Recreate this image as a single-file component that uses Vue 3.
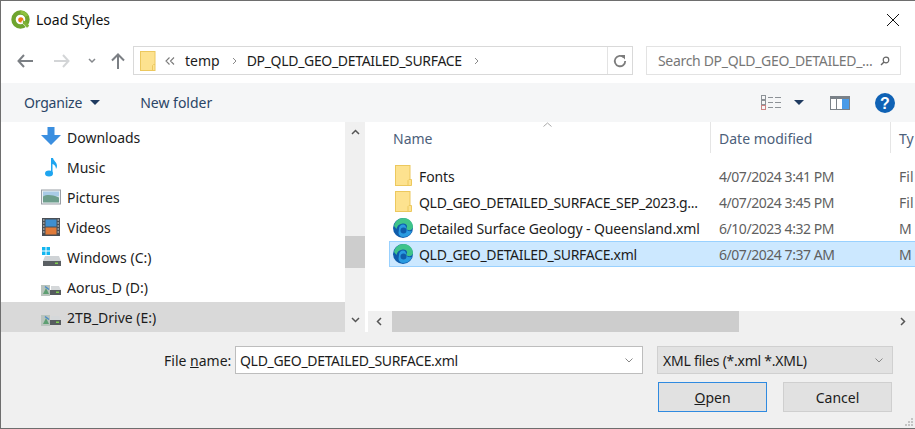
<template>
  <div class="dialog">
    <!-- Title bar -->
    <header class="titlebar">
      <svg class="qgis" viewBox="0 0 20 20" width="20" height="20">
        <circle cx="9.5" cy="9.5" r="7" fill="none" stroke="#6fa52f" stroke-width="4.4" />
        <path d="M9.5 2.3a7.2 7.2 0 0 1 6.3 3.8" fill="none" stroke="#8fc13e" stroke-width="3" />
        <circle cx="9.8" cy="9.8" r="2.6" fill="#ee7913" />
        <path d="M11 11l6 6.5" stroke="#f0f0e8" stroke-width="2.6" />
        <path d="M12 10.2l3.2 1.6 3 4-2.2 2-4-4.5z" fill="#7fb235" />
      </svg>
      <span class="title">Load Styles</span>
      <svg class="close" viewBox="0 0 12 12" width="12" height="12">
        <path d="M0 0l12 12M12 0L0 12" stroke="#111" stroke-width="1" />
      </svg>
    </header>

    <!-- Address row -->
    <div class="addressrow">
      <svg class="nav back" viewBox="0 0 16 14" width="16" height="14">
        <path d="M7 1L1.5 7 7 13M2 7h14" fill="none" stroke="#7b7f84" stroke-width="2" />
      </svg>
      <svg class="nav forward" viewBox="0 0 16 14" width="16" height="14">
        <path d="M9 1l5.5 6L9 13M14 7H0" fill="none" stroke="#d3d5d7" stroke-width="2" />
      </svg>
      <svg class="nav recent" viewBox="0 0 8 6" width="8" height="6">
        <path d="M1 1l3 3 3-3" fill="none" stroke="#85888c" stroke-width="1.5" />
      </svg>
      <svg class="nav up" viewBox="0 0 14 16" width="14" height="16">
        <path d="M1 7.5L7 1.5l6 6M7 2v14" fill="none" stroke="#7b7f84" stroke-width="2" />
      </svg>
      <div class="address">
        <svg class="crumbfolder" viewBox="0 0 16 20" width="16" height="20">
          <rect x=".5" y=".5" width="14.5" height="19" fill="#fde28f" stroke="#ecc85e" />
          <path d="M12.5 19.5v-5l1-1h1.500" fill="none" stroke="#ecc85e" />
        </svg>
        <svg class="crumbmore" viewBox="0 0 10 8" width="10" height="8">
          <path d="M4.500 .5L1 4l3.500 3.500M9 .5L5.500 4 9 7.500" fill="none" stroke="#7a7a7a" stroke-width="1.100" />
        </svg>
        <span class="crumb first">temp</span>
        <svg class="crumbsep" viewBox="0 0 5 8" width="5" height="8"><path d="M1 1l3 3-3 3" fill="none" stroke="#8a8a8a" /></svg>
        <span class="crumb caps">DP_QLD_GEO_DETAILED_SURFACE</span>
        <svg class="crumbsep" viewBox="0 0 5 8" width="5" height="8"><path d="M1 1l3 3-3 3" fill="none" stroke="#8a8a8a" /></svg>
        <div class="refresh">
          <svg viewBox="0 0 14 14" width="14" height="14">
            <path d="M10.800 3.500A5.200 5.200 0 1 0 12.200 7" fill="none" stroke="#7c7c7c" stroke-width="1.800" />
            <path d="M7.500 1h4.500v4.500z" fill="#7c7c7c" />
          </svg>
        </div>
      </div>
      <div class="search">
        <span class="searchtext">Search DP_QLD_GEO_DETAILED_...</span>
        <svg viewBox="0 0 10 10" width="10" height="10">
          <circle cx="6" cy="4" r="2.800" fill="none" stroke="#666" stroke-width="1.200" />
          <path d="M4 6L1 9" stroke="#666" stroke-width="1.500" />
        </svg>
      </div>
    </div>

    <!-- Command bar -->
    <div class="toolbar">
      <span class="tool organize">Organize</span>
      <span class="caret"></span>
      <span class="tool newfolder">New folder</span>
      <svg class="viewicon" viewBox="0 0 21 16" width="21" height="16">
        <g fill="none" stroke="#8d9297">
          <rect x=".5" y=".5" width="4" height="4" />
          <rect x=".5" y="5.500" width="4" height="4" />
          <rect x=".5" y="10.500" width="4" height="4" stroke="#c98484" />
          <path d="M7 2.500h5M14 2.500h6M7 7.500h5M14 7.500h6M7 12.500h5M14 12.500h6" />
        </g>
      </svg>
      <span class="caret viewcaret"></span>
      <svg class="paneicon" viewBox="0 0 20 14" width="20" height="14">
        <rect x=".5" y=".5" width="19" height="13" fill="#fff" stroke="#7a8188" />
        <rect x="1" y="1" width="18" height="2" fill="#7a8188" />
        <rect x="6" y="1" width="1" height="12" fill="#7a8188" />
        <rect x="12" y="3" width="7" height="10" fill="#4a9be8" />
      </svg>
      <svg class="helpicon" viewBox="0 0 20 20" width="20" height="20">
        <circle cx="10" cy="10" r="10" fill="#0f62b5" />
        <text x="10" y="15.500" text-anchor="middle" class="helpmark">?</text>
      </svg>
    </div>

    <!-- Navigation pane and file list -->
    <main class="body">
      <nav class="sidebar">
        <div
          v-for="item in places"
          :key="item.label"
          class="place"
          :class="{ current: item.current }"
        >
          <svg class="placeicon" viewBox="0 0 20 20" width="20" height="20">
            <path v-if="item.icon === 'down'" d="M6.500 0h7v8H20L10 18 0 8h6.500z" fill="#3b8fe0" />
            <g v-else-if="item.icon === 'music'">
              <path d="M10 1h2c.5 3 4 4 4 8 0 1-.3 2-1 3 0-3-2-4.500-3.500-5v9h-1.500z" fill="#1ea5f0" />
              <ellipse cx="8" cy="16.500" rx="4" ry="3" fill="#1ea5f0" />
            </g>
            <g v-else-if="item.icon === 'pictures'">
              <rect x=".5" y="3" width="19" height="14" fill="#eef2f5" stroke="#9a9fa5" />
              <rect x="2" y="4.500" width="16" height="5" fill="#a9cbe6" />
              <path d="M2 9.500c4-2 8-2 16 1v5H2z" fill="#6d9e8c" />
            </g>
            <g v-else-if="item.icon === 'videos'">
              <rect x="1" y="1" width="18" height="18" fill="#4a4f55" />
              <rect x="4.500" y="2.500" width="11" height="7" fill="#3f8fd0" />
              <rect x="4.500" y="10.500" width="11" height="7" fill="#e07b3a" />
              <path d="M2 3h1.500M2 6h1.500M2 9h1.500M2 12h1.500M2 15h1.500M16.500 3H18M16.500 6H18M16.500 9H18M16.500 12H18M16.500 15H18" stroke="#ddd" />
            </g>
            <g v-else-if="item.icon === 'windows'">
              <path d="M1 0h3.500v3.500H1zM5.500 0H9v3.500H5.500zM1 4.500h3.500V8H1zM5.500 4.500H9V8H5.500z" fill="#12b6f0" />
              <path d="M4 9h14l2 5H2z" fill="#cfd3d6" />
              <rect x="2" y="14" width="18" height="5" fill="#5a5f63" />
              <rect x="14" y="15.500" width="3" height="1.500" fill="#7fd04f" />
            </g>
            <g v-else>
              <rect x="0" y="8" width="9" height="11" fill="#b9c4bd" />
              <path d="M2 17l3-6 3 6z" fill="#5e9f72" />
              <path d="M4 9.500l4 3" stroke="#4a89c7" stroke-width="1.500" />
              <path d="M10 9h8l2 4H10z" fill="#d5d8da" />
              <rect x="9" y="13" width="11" height="5" fill="#565b5f" />
              <rect x="15" y="14.500" width="3" height="1.500" fill="#7fd04f" />
            </g>
          </svg>
          <span>{{ item.label }}</span>
        </div>
      </nav>

      <div class="vscroll">
        <svg viewBox="0 0 9 6" width="9" height="6"><path d="M1 5l3.500-3.500L8 5" fill="none" stroke="#555" stroke-width="1.500" /></svg>
        <div class="vtrack"><div class="vthumb"></div></div>
        <svg viewBox="0 0 9 6" width="9" height="6"><path d="M1 1l3.500 3.500L8 1" fill="none" stroke="#555" stroke-width="1.500" /></svg>
      </div>

      <section class="listpane">
        <div class="listhead">
          <div class="col-name headcell">
            Name
            <svg class="sortmark" viewBox="0 0 9 5" width="9" height="5"><path d="M.5 4.500L4.500 1l4 3.500" fill="none" stroke="#a8a8a8" /></svg>
          </div>
          <div class="col-date headcell">Date modified</div>
          <div class="col-type headcell">Ty</div>
        </div>

        <div class="rows">
          <div
            v-for="file in files"
            :key="file.name"
            class="row"
            :class="{ selected: file.selected }"
          >
            <div class="col-name filecell">
              <svg v-if="file.kind === 'folder'" class="fileicon" viewBox="0 0 20 22" width="20" height="22">
                <rect x="2.500" y=".5" width="14.500" height="20" fill="#fde28f" stroke="#ecc85e" />
                <path d="M15 20.500v-5l1-1h2.500v6z" fill="#fde28f" stroke="#ecc85e" />
              </svg>
              <svg v-else class="fileicon" viewBox="0 0 20 20" width="20" height="20">
                <circle cx="10" cy="10" r="10" fill="#0f5cab" />
                <path d="M1 8C2 3 6 0 10.500 0 16 0 20 4 20 9c0 2.500-2.500 3.500-5 3-2-.5-2-2-1-3 .5-2.500-2-4-4.500-3.500C6 6 4 8 3.500 11z" fill="#3fc48a" />
                <path d="M6 11c0-3 2-4.500 4-4.500s3 1.500 3 3c0 3 3 4.500 6 3.500-1 3-4.500 6-8.500 6-3 0-5-2-5-4z" fill="#2a9be0" />
                <circle cx="10.500" cy="12.500" r="3" fill="#0f5cab" />
              </svg>
              <span class="filename" :class="{ caps: file.caps }">{{ file.name }}</span>
            </div>
            <div class="col-date filedate">{{ file.date }}</div>
            <div class="col-type filetype">{{ file.type }}</div>
          </div>
        </div>

        <div class="hscroll">
          <svg viewBox="0 0 6 9" width="6" height="9"><path d="M5 1L1.500 4.500 5 8" fill="none" stroke="#555" stroke-width="1.500" /></svg>
          <div class="htrack"><div class="hthumb"></div></div>
          <svg viewBox="0 0 6 9" width="6" height="9"><path d="M1 1l3.500 3.500L1 8" fill="none" stroke="#555" stroke-width="1.500" /></svg>
        </div>
      </section>
    </main>

    <!-- File name and buttons -->
    <footer class="footer">
      <div class="fieldrow">
        <label class="fieldlabel">File <u>n</u>ame:</label>
        <div class="combo">
          <span class="caps">QLD_GEO_DETAILED_SURFACE.xml</span>
          <svg viewBox="0 0 8 5" width="8" height="5"><path d="M.5.5L4 4 7.500.5" fill="none" stroke="#888" /></svg>
        </div>
        <div class="filter">
          <span class="filtertext">XML files (*.xml *.XML)</span>
          <svg viewBox="0 0 8 5" width="8" height="5"><path d="M.5.5L4 4 7.500.5" fill="none" stroke="#888" /></svg>
        </div>
      </div>
      <div class="buttonrow">
        <button class="btn primary"><u>O</u>pen</button>
        <button class="btn">Cancel</button>
      </div>
      <svg class="grip" viewBox="0 0 9 9" width="9" height="9">
        <path d="M7 1h2v2H7zM4 4h2v2H4zM7 4h2v2H7zM1 7h2v2H1zM4 7h2v2H4zM7 7h2v2H7z" fill="#c4c4c4" />
      </svg>
    </footer>
  </div>
</template>

<script setup>
const places = [
  { label: 'Downloads', icon: 'down' },
  { label: 'Music', icon: 'music' },
  { label: 'Pictures', icon: 'pictures' },
  { label: 'Videos', icon: 'videos' },
  { label: 'Windows (C:)', icon: 'windows' },
  { label: 'Aorus_D (D:)', icon: 'drive' },
  { label: '2TB_Drive (E:)', icon: 'drive', current: true }
]

const files = [
  { name: 'Fonts', kind: 'folder', date: '4/07/2024 3:41 PM', type: 'Fil' },
  { name: 'QLD_GEO_DETAILED_SURFACE_SEP_2023.g...', kind: 'folder', date: '4/07/2024 3:45 PM', type: 'Fil', caps: true },
  { name: 'Detailed Surface Geology - Queensland.xml', kind: 'edge', date: '6/10/2023 4:32 PM', type: 'M' },
  { name: 'QLD_GEO_DETAILED_SURFACE.xml', kind: 'edge', date: '6/07/2024 7:37 AM', type: 'M', selected: true, caps: true }
]
</script>

<style>
html,
body {
  margin: 0;
  background: #fff;
  overflow: hidden;
}
</style>

<style scoped>
.dialog {
  width: 915px;
  height: 429px;
  box-sizing: border-box;
  border: 1px solid #6e6e6e;
  border-right: none;
  display: flex;
  flex-direction: column;
  background: #fff;
  color: #1c1c1c;
  font-family: "Noto Sans", "Open Sans", sans-serif;
  font-size: 14px;
}

svg {
  flex: none;
  display: block;
}

.caps {
  letter-spacing: -0.32px;
}

.titlebar {
  height: 37px;
  display: flex;
  align-items: center;
  padding: 0 16px 0 10px;
}

.title {
  margin-left: 5px;
  color: #111;
}

.close {
  margin-left: auto;
}

.addressrow {
  height: 45px;
  display: flex;
  align-items: center;
  box-sizing: border-box;
}

.back { margin-left: 16px; }
.forward { margin-left: 21px; }
.recent { margin-left: 18px; }
.up { margin-left: 15px; }

.address {
  width: 500px;
  height: 29px;
  box-sizing: border-box;
  margin-left: 8px;
  border: 1px solid #d9d9d9;
  display: flex;
  align-items: center;
  padding-left: 6px;
}

.crumbmore {
  margin-left: 9px;
}

.crumb {
  margin-left: 10px;
  color: #1c1c1c;
}

.crumb.first {
  margin-left: 10px;
}

.crumbsep {
  margin-left: 12px;
}

.refresh {
  margin-left: auto;
  width: 24px;
  height: 100%;
  border-left: 1px solid #e3e3e3;
  display: flex;
  align-items: center;
  justify-content: center;
}

.search {
  width: 255px;
  height: 29px;
  box-sizing: border-box;
  margin-left: 13px;
  border: 1px solid #e3e3e3;
  display: flex;
  align-items: center;
  justify-content: space-between;
  padding: 0 10px 0 11px;
}

.searchtext {
  color: #777;
  white-space: nowrap;
  letter-spacing: -0.32px;
}

.toolbar {
  height: 39px;
  background: #f5f6f7;
  display: flex;
  align-items: center;
  color: #2b4566;
}

.organize {
  margin-left: 23px;
  letter-spacing: -0.2px;
}

.caret {
  margin-left: 8px;
  width: 0;
  height: 0;
  border-left: 5px solid transparent;
  border-right: 5px solid transparent;
  border-top: 5px solid #1f3a60;
}

.newfolder { margin-left: 40px; }
.viewicon { margin-left: 549px; }
.viewcaret { margin-left: 12px; }
.paneicon { margin-left: 26px; }
.helpicon { margin-left: 25px; }

.helpmark {
  fill: #fff;
  font-family: "Liberation Sans", sans-serif;
  font-size: 16px;
  font-weight: 700;
}

.body {
  height: 210px;
  display: flex;
  background: #fff;
}

.sidebar {
  width: 344px;
  display: flex;
  flex-direction: column;
}

.place {
  height: 30px;
  display: flex;
  align-items: center;
  padding-left: 40px;
  gap: 6px;
}

.place.current {
  background: #d9d9d9;
}

.vscroll {
  width: 20px;
  background: #f0f0f0;
  display: flex;
  flex-direction: column;
  align-items: center;
  padding: 7px 0 9px;
  box-sizing: border-box;
}

.vtrack {
  flex: 1;
  width: 100%;
  padding-top: 101px;
  box-sizing: border-box;
}

.vthumb {
  height: 32px;
  background: #cdcdcd;
}

.listpane {
  flex: 1;
  min-width: 0;
  margin-left: 3px;
  display: flex;
  flex-direction: column;
  overflow: hidden;
}

.listhead {
  height: 31px;
  display: flex;
  color: #4c607a;
}

.col-name {
  width: 343px;
  flex: none;
}

.col-date {
  width: 180px;
  flex: none;
}

.col-type {
  flex: 1;
  min-width: 0;
}

.headcell {
  position: relative;
  box-sizing: border-box;
  display: flex;
  align-items: center;
  padding-left: 8px;
  padding-top: 2px;
}

.col-name.headcell {
  padding-left: 25px;
  border-right: 1px solid #e5e5e5;
}

.col-date.headcell {
  border-right: 1px solid #e5e5e5;
}

.sortmark {
  position: absolute;
  left: 175px;
  top: 0;
}

.rows {
  flex: 1;
  padding-top: 10px;
}

.row {
  height: 26px;
  box-sizing: border-box;
  margin-left: 21px;
  display: flex;
  align-items: center;
  border: 1px solid transparent;
}

.row .col-name {
  width: 321px;
}

.row.selected {
  background: #cce8ff;
  border-color: #99d1ff;
  border-right: none;
}

.filecell {
  display: flex;
  align-items: center;
  padding-left: 3px;
  box-sizing: border-box;
  gap: 6px;
  white-space: nowrap;
}

.filename {
  color: #1c1c1c;
  letter-spacing: -0.1px;
}

.filename.caps {
  letter-spacing: -0.32px;
}

.filedate,
.filetype {
  color: #5f5f5f;
  padding-left: 8px;
  box-sizing: border-box;
}

.filedate {
  letter-spacing: -0.45px;
}

.hscroll {
  height: 21px;
  flex: none;
  background: #f0f0f0;
  display: flex;
  align-items: center;
  padding: 0 9px 0 8px;
}

.htrack {
  flex: 1;
  height: 100%;
  padding-left: 10px;
  box-sizing: border-box;
}

.hthumb {
  width: 347px;
  height: 100%;
  background: #cdcdcd;
}

.footer {
  position: relative;
  flex: 1;
  background: #f0f0f0;
  display: flex;
  flex-direction: column;
  gap: 8px;
  padding-top: 14px;
  box-sizing: border-box;
}

.fieldrow {
  height: 28px;
  display: flex;
  align-items: center;
}

.fieldlabel {
  margin-left: 163px;
  width: 71px;
}

.combo {
  width: 408px;
  height: 28px;
  box-sizing: border-box;
  background: #fff;
  border: 1px solid #bdbdbd;
  display: flex;
  align-items: center;
  justify-content: space-between;
  padding: 0 9px 0 4px;
}

.filter {
  width: 236px;
  height: 28px;
  box-sizing: border-box;
  margin-left: 14px;
  background: #e2e2e2;
  border: 1px solid #d0d0d0;
  display: flex;
  align-items: center;
  justify-content: space-between;
  padding: 0 9px 0 5px;
}

.filtertext {
  letter-spacing: -0.25px;
}

.buttonrow {
  display: flex;
  justify-content: flex-end;
  gap: 16px;
  padding-right: 23px;
}

.btn {
  width: 109px;
  height: 30px;
  box-sizing: border-box;
  background: #e1e1e1;
  border: 1px solid #cfcfcf;
  font: inherit;
  color: #1c1c1c;
  padding: 0;
}

.btn.primary {
  border: 1px solid #2f8ae0;
}

.grip {
  position: absolute;
  right: 2px;
  bottom: 2px;
}
</style>
